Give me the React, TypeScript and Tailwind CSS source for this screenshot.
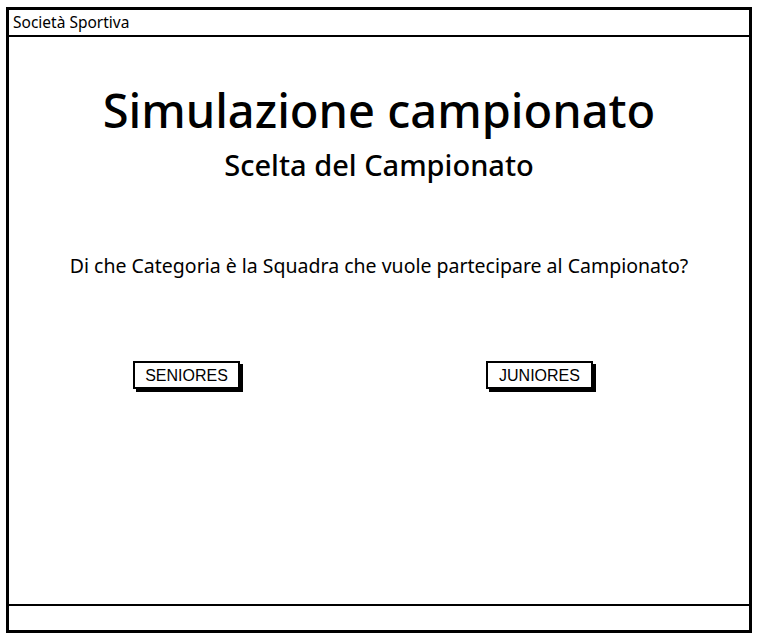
import React from "react";

export default function App() {
  return (
    <div className="w-[760px] h-[644px] bg-white relative" style={{ fontFamily: '"Noto Sans", sans-serif' }}>
      <div className="absolute left-[6px] top-[7px] w-[746px] h-[626px] border-[3px] border-black flex flex-col bg-white">
        <div className="h-[27px] border-b-[2px] border-black flex items-center pl-[4px] shrink-0">
          <span className="text-[15.5px] leading-none text-black">Società Sportiva</span>
        </div>
        <div className="flex-1 flex flex-col">
          <h1 className="mt-[45px] text-center text-[47px] leading-[57px] font-medium text-black">Simulazione campionato</h1>
          <h2 className="mt-[8px] text-center text-[29px] leading-[36px] font-medium text-black">Scelta del Campionato</h2>
          <p className="mt-[70px] text-center text-[19.5px] leading-[26px] text-black">Di che Categoria è la Squadra che vuole partecipare al Campionato?</p>
          <div className="mt-[82px] flex flex-row pl-[124px]">
            <button className="w-[107px] h-[28px] pt-[2px] border-[2px] border-black bg-white shadow-[3px_3px_0_0_#000] text-[16px] text-black flex items-center justify-center" style={{ fontFamily: '"Liberation Sans", Arial, sans-serif' }}>SENIORES</button>
            <button className="ml-[246px] w-[107px] h-[28px] pt-[2px] border-[2px] border-black bg-white shadow-[3px_3px_0_0_#000] text-[16px] text-black flex items-center justify-center" style={{ fontFamily: '"Liberation Sans", Arial, sans-serif' }}>JUNIORES</button>
          </div>
        </div>
        <div className="h-[26px] border-t-[2px] border-black shrink-0"></div>
      </div>
    </div>
  );
}
